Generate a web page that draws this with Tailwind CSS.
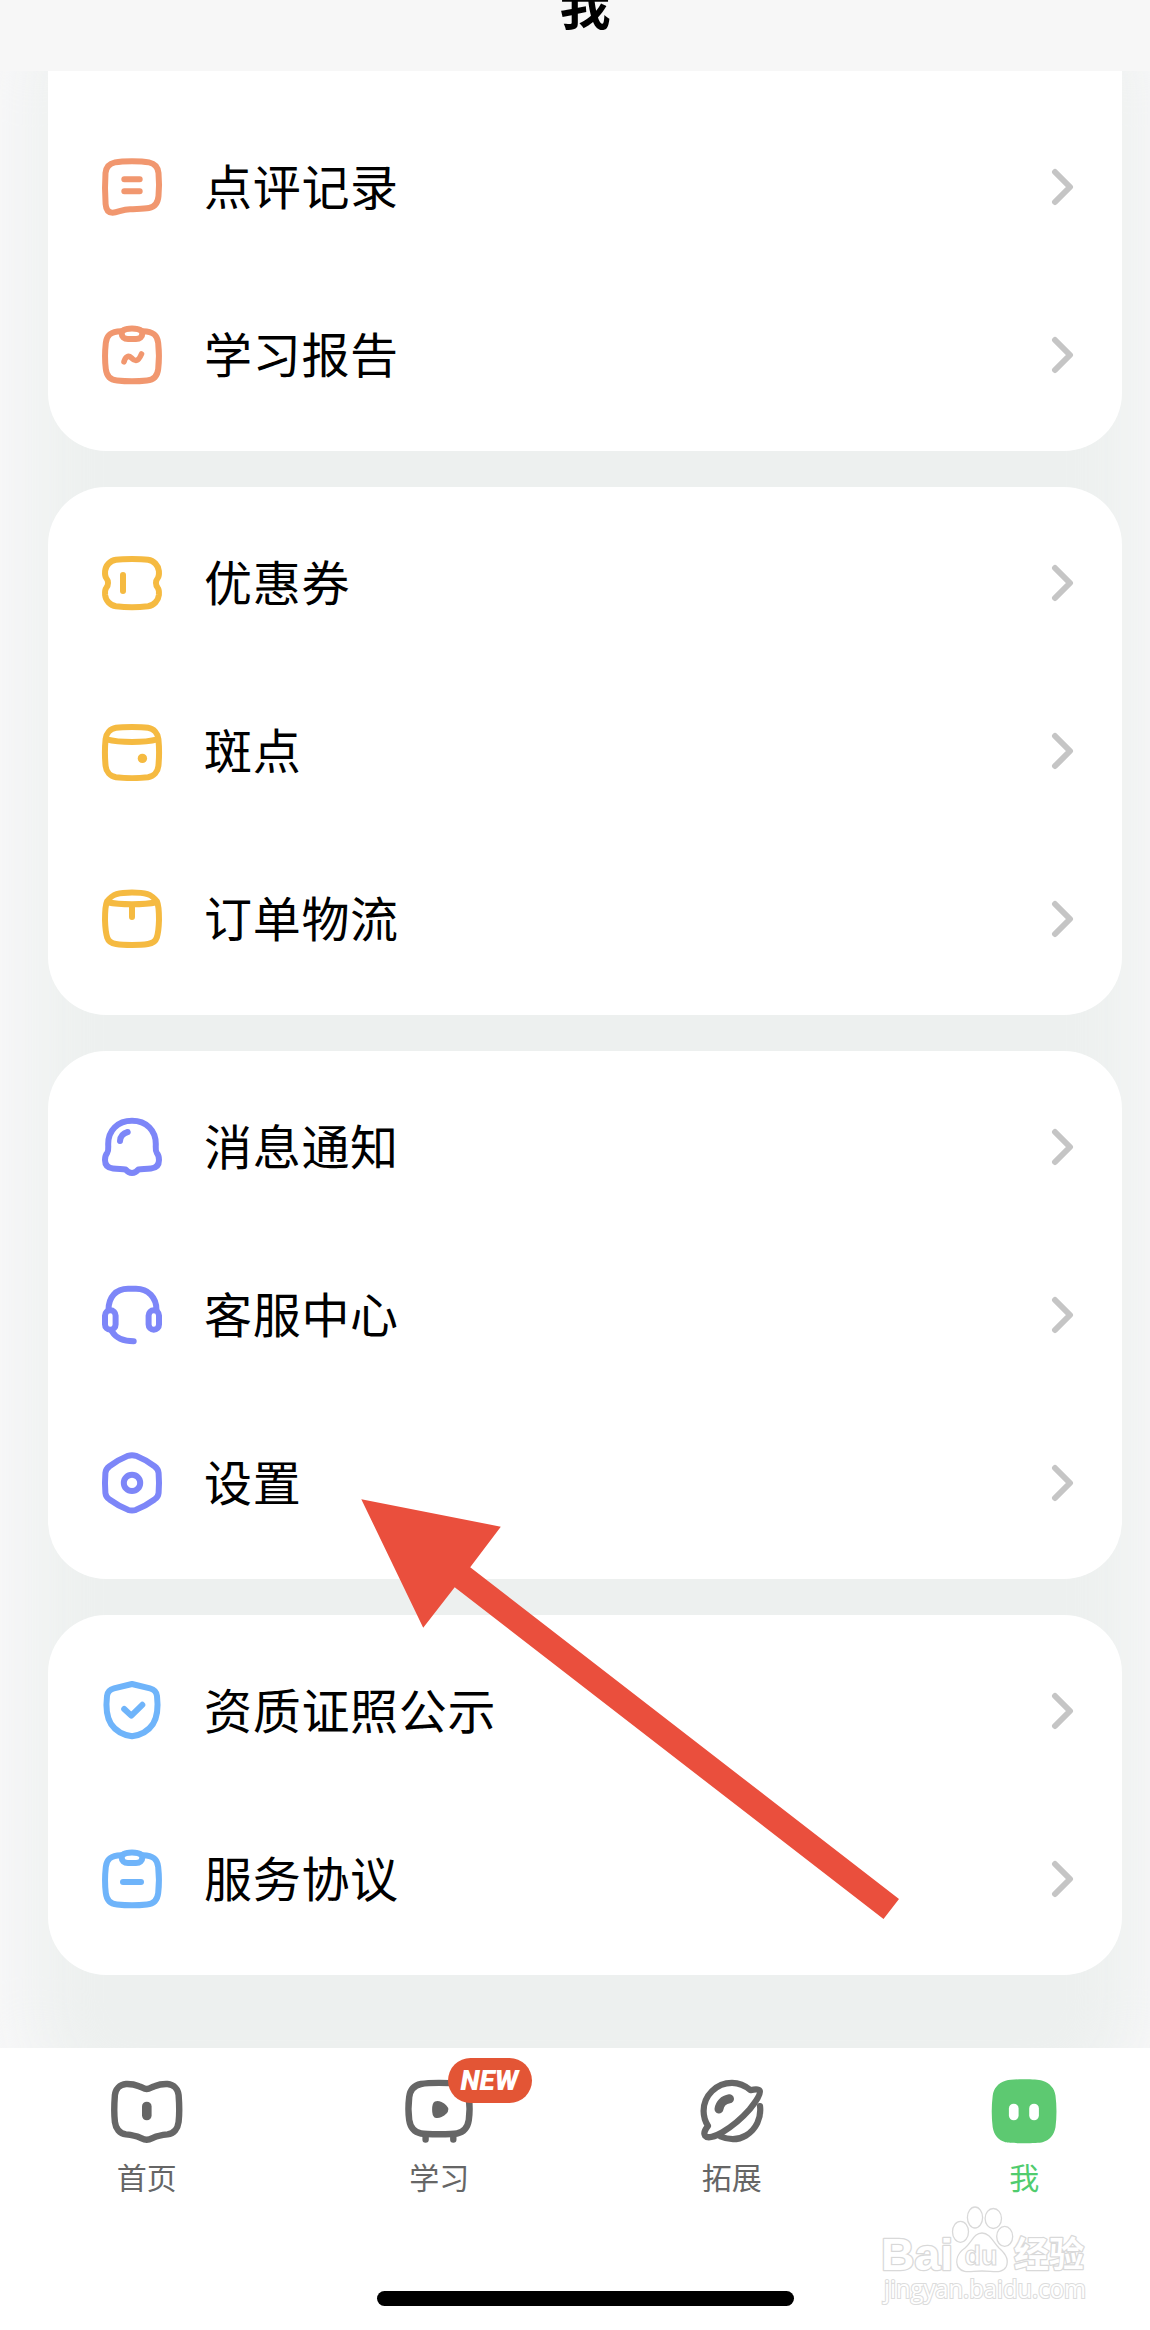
<!DOCTYPE html>
<html lang="zh-CN">
<head>
  <meta charset="UTF-8" />
  <meta name="viewport" content="width=device-width, initial-scale=1.0"/>
  <title>我</title>
  <script src="https://cdn.jsdelivr.net/npm/@tailwindcss/browser@4"></script>
</head>
<body class="bg-white text-black font-['Noto_Sans_CJK_SC',sans-serif]">

  <!-- Shared shapes -->
  <svg class="hidden">
    <symbol id="chevron" viewBox="0 0 24 40">
      <path d="M5 5L20 20L5 35" fill="none" stroke="#c5c5c5" stroke-width="6" stroke-linecap="round" stroke-linejoin="round"/>
    </symbol>
    <symbol id="clipboard" viewBox="0 0 72 72">
      <path d="M25 12.3C14 12.5 10.5 17 9.8 24C8.8 33 8.8 42 9.8 50C10.6 57 14 61 21 61.5C30 62.5 42 62.5 51 61.5C58 61 61.4 57 62.2 50C63.2 42 63.2 33 62.2 24C61.5 17 58 12.5 47 12.3"/>
      <path d="M30 10.2C33 9.5 39 9.5 42 10.2C45 10.8 46.3 12 46.3 14.5C46.3 18 44 20 40 20H32C28 20 25.7 18 25.7 14.5C25.7 12 27 10.8 30 10.2Z"/>
    </symbol>
  </svg>

  <div class="relative w-full h-[2330px] overflow-hidden">
    <div class="w-[1170px] h-full flex flex-col">

      <!-- Title bar -->
      <header class="h-[71px] shrink-0 bg-[#f7f7f7] flex justify-center">
        <h1 class="h-[51px] mt-[-22px] text-[51px] leading-[51px] font-bold">我</h1>
      </header>

      <!-- Menu -->
      <main class="relative h-[1977px] shrink-0 overflow-hidden bg-[#f8f8f9]">
        <div class="absolute -top-20 -bottom-16 left-8 right-8 rounded-[100px] bg-[#edf0ef] blur-[30px]"></div>

        <div class="relative px-12 flex flex-col gap-9">
          <section class="bg-white rounded-b-[58px] pt-8 pb-3">
            <div class="h-[168px] pl-12 pr-12 flex items-center">
              <svg class="size-[72px] text-[#f1976f]" viewBox="0 0 72 72" fill="none" stroke="currentColor" stroke-width="6" stroke-linecap="round" stroke-linejoin="round">
                <path d="M36 10.2C44 10.2 49 10.6 53 11.4C59 12.6 62 17 62.5 22C63.2 30 63.2 38 62.5 45C62 51 59 56 53 57C48 58 42 57.8 34 58.2C26 58.5 22 61.5 16.5 61.7C12.5 61.7 10 58.5 9.6 53C8.9 43 8.8 32 9.5 22C10 17 13 12.6 19 11.4C23 10.6 28 10.2 36 10.2Z"/>
                <path d="M28.3 28.3H43.7M28.3 40.3H43.7"/>
              </svg>
              <span class="ml-9 pb-1.5 text-[48px] leading-[60px] tracking-[0.7px]">点评记录</span>
              <svg class="ml-auto w-6 h-10"><use href="#chevron"/></svg>
            </div>
            <div class="h-[168px] pl-12 pr-12 flex items-center">
              <svg class="size-[72px] text-[#f1976f]" viewBox="0 0 72 72" fill="none" stroke="currentColor" stroke-width="6" stroke-linecap="round" stroke-linejoin="round">
                <use href="#clipboard"/>
                <path d="M28 42.8C29.3 37.8 32.3 36 35.3 38.8C39 42.6 42 43.2 45.5 35" stroke-width="5.6"/>
              </svg>
              <span class="ml-9 pb-1.5 text-[48px] leading-[60px] tracking-[0.7px]">学习报告</span>
              <svg class="ml-auto w-6 h-10"><use href="#chevron"/></svg>
            </div>
          </section>

          <section class="bg-white rounded-[58px] py-3">
            <div class="h-[168px] pl-12 pr-12 flex items-center">
              <svg class="size-[72px] text-[#f5ba41]" viewBox="0 0 72 72" fill="none" stroke="currentColor" stroke-width="6" stroke-linecap="round" stroke-linejoin="round">
                <path d="M36 12C43 12 48 12.2 52 12.7C58 13.6 62.3 18.5 62.9 24C63.2 28 63 29.5 61.8 31C59.4 34 59.4 38 61.8 41C63 42.5 63.2 44 62.9 48C62.3 53.5 58 58.4 52 59.3C44 60.2 28 60.2 20 59.3C14 58.4 9.7 53.5 9.1 48C8.8 44 9 42.5 10.2 41C12.6 38 12.6 34 10.2 31C9 29.5 8.8 28 9.1 24C9.7 18.5 14 13.6 20 12.7C24 12.2 29 12 36 12Z"/>
                <path d="M27 28V44"/>
              </svg>
              <span class="ml-9 pb-1.5 text-[48px] leading-[60px] tracking-[0.7px]">优惠券</span>
              <svg class="ml-auto w-6 h-10"><use href="#chevron"/></svg>
            </div>
            <div class="h-[168px] pl-12 pr-12 flex items-center">
              <svg class="size-[72px] text-[#f5ba41]" viewBox="0 0 72 72" fill="none" stroke="currentColor" stroke-width="6" stroke-linecap="round" stroke-linejoin="round">
                <path d="M36 12C43 12 48 12.2 52 12.8C58 13.8 61.8 18.5 62.4 24C63.2 32 63.2 43 62.4 51C61.8 56.5 58 61.2 52 62.2C44 63.2 28 63.2 20 62.2C14 61.2 10.2 56.5 9.6 51C8.8 43 8.8 32 9.6 24C10.2 18.5 14 13.8 20 12.8C24 12.2 29 12 36 12Z"/>
                <path d="M10.5 24.3C24 27.8 48 27.8 61.5 24.3"/>
                <circle cx="46.4" cy="43.4" r="4.7" fill="currentColor" stroke="none"/>
              </svg>
              <span class="ml-9 pb-1.5 text-[48px] leading-[60px] tracking-[0.7px]">斑点</span>
              <svg class="ml-auto w-6 h-10"><use href="#chevron"/></svg>
            </div>
            <div class="h-[168px] pl-12 pr-12 flex items-center">
              <svg class="size-[72px] text-[#f5ba41]" viewBox="0 0 72 72" fill="none" stroke="currentColor" stroke-width="6" stroke-linecap="round" stroke-linejoin="round">
                <path d="M36 9.6C43 9.6 48 10.2 51.5 11.2C54.5 12 59 15.5 61 18.5C62.6 22 63 29 63 37C62.8 44 62.2 50 60.8 54.5C59.5 58.5 57 60.3 52 61C44 62.2 28 62.2 20 61C15 60.3 12.5 58.5 11.2 54.5C9.8 50 9.2 44 9 37C9 29 9.4 22 11 18.5C13 15.5 17.5 12 20.5 11.2C24 10.2 29 9.6 36 9.6Z"/>
                <path d="M11.5 19.3C24 22 48 22 60.5 19.3M36 22V34"/>
              </svg>
              <span class="ml-9 pb-1.5 text-[48px] leading-[60px] tracking-[0.7px]">订单物流</span>
              <svg class="ml-auto w-6 h-10"><use href="#chevron"/></svg>
            </div>
          </section>

          <section class="bg-white rounded-[58px] py-3">
            <div class="h-[168px] pl-12 pr-12 flex items-center">
              <svg class="size-[72px] text-[#7d86f8]" viewBox="0 0 72 72" fill="none" stroke="currentColor" stroke-width="6" stroke-linecap="round" stroke-linejoin="round">
                <path d="M36 9.8C21.5 9.8 12.2 19.5 12.2 33C12.2 37 12.8 39.5 11.2 42C9.4 44 9 46 9 49C9 54.5 12 57 17 57.5C22 58 26 58 29.5 58.4C31.5 61 33 62 36 62C39 62 40.5 61 42.5 58.4C46 58 50 58 55 57.5C60 57 63 54.5 63 49C63 46 62.6 44 60.8 42C59.2 39.5 59.8 37 59.8 33C59.8 19.5 50.5 9.8 36 9.8Z"/>
                <path d="M24 30C24.3 26 27 22.3 31.7 21"/>
              </svg>
              <span class="ml-9 pb-1.5 text-[48px] leading-[60px] tracking-[0.7px]">消息通知</span>
              <svg class="ml-auto w-6 h-10"><use href="#chevron"/></svg>
            </div>
            <div class="h-[168px] pl-12 pr-12 flex items-center">
              <svg class="size-[72px] text-[#7d86f8]" viewBox="0 0 72 72" fill="none" stroke="currentColor" stroke-width="6" stroke-linecap="round" stroke-linejoin="round">
                <path d="M12.5 31C12.5 18 20 9.8 32 9.8H40C52 9.8 60.5 18 60.5 31"/>
                <rect x="9" y="31.3" width="10.6" height="19.4" rx="5.3"/>
                <rect x="52.6" y="31.3" width="10.4" height="19.4" rx="5.2"/>
                <path d="M16 52.5C20 59 27 62.3 37.7 62.3"/>
              </svg>
              <span class="ml-9 pb-1.5 text-[48px] leading-[60px] tracking-[0.7px]">客服中心</span>
              <svg class="ml-auto w-6 h-10"><use href="#chevron"/></svg>
            </div>
            <div class="h-[168px] pl-12 pr-12 flex items-center">
              <svg class="size-[72px] text-[#7d86f8]" viewBox="0 0 72 72" fill="none" stroke="currentColor" stroke-width="6" stroke-linecap="round" stroke-linejoin="round">
                <path d="M32 8.8C35 7.8 37 7.8 40 8.8C46 11.2 53 15.2 58.5 19.2C61 21 62.3 23 62.6 26C63.1 32 63.1 40 62.6 46C62.3 49 61 51 58.5 52.5C53 56.5 46 60.5 40 62.8C37 63.8 35 63.8 32 62.8C26 60.5 19 56.5 13.5 52.5C11 51 9.7 49 9.4 46C8.9 40 8.9 32 9.4 26C9.7 23 11 21 13.5 19.2C19 15.2 26 11.2 32 8.8Z"/>
                <circle cx="36" cy="35.9" r="8.2"/>
              </svg>
              <span class="ml-9 pb-1.5 text-[48px] leading-[60px] tracking-[0.7px]">设置</span>
              <svg class="ml-auto w-6 h-10"><use href="#chevron"/></svg>
            </div>
          </section>

          <section class="bg-white rounded-[58px] py-3">
            <div class="h-[168px] pl-12 pr-12 flex items-center">
              <svg class="size-[72px] text-[#6fb4fa]" viewBox="0 0 72 72" fill="none" stroke="currentColor" stroke-width="6" stroke-linecap="round" stroke-linejoin="round">
                <path d="M36 9L54 13.4C58.5 14.6 60.5 17 61 21C62.3 32 62 41 57 49C52 56.5 45 60 36 61.3C27 60 20 56.5 15 49C10 41 9.7 32 11 21C11.5 17 13.5 14.6 18 13.4Z"/>
                <path d="M28.2 34L35.3 40.6L46.3 29.8"/>
              </svg>
              <span class="ml-9 pb-1.5 text-[48px] leading-[60px] tracking-[0.7px]">资质证照公示</span>
              <svg class="ml-auto w-6 h-10"><use href="#chevron"/></svg>
            </div>
            <div class="h-[168px] pl-12 pr-12 flex items-center">
              <svg class="size-[72px] text-[#6fb4fa]" viewBox="0 0 72 72" fill="none" stroke="currentColor" stroke-width="6" stroke-linecap="round" stroke-linejoin="round">
                <use href="#clipboard"/>
                <path d="M27 39H45"/>
              </svg>
              <span class="ml-9 pb-1.5 text-[48px] leading-[60px] tracking-[0.7px]">服务协议</span>
              <svg class="ml-auto w-6 h-10"><use href="#chevron"/></svg>
            </div>
          </section>
        </div>
      </main>

      <!-- Tab bar -->
      <nav class="grid grid-cols-4 pt-[27px] bg-white text-[#666]">
        <a class="flex flex-col items-center">
          <svg class="w-20 h-[72px]" viewBox="0 0 80 72" fill="none" stroke="currentColor" stroke-width="6.4" stroke-linecap="round" stroke-linejoin="round">
            <path d="M40.7 14C43.5 14 45.5 12.3 48.5 11.2C52.5 9.6 57 8.8 61.5 9C68 9.5 72 14.5 72.6 20C73.4 30 73.4 40 72.6 47C71.8 53.5 68 58.5 61.5 59.4C56 60 51 61 47.5 62.6C45 63.8 43.5 64.8 40.7 64.8C38 64.8 36.5 63.8 34 62.6C30.5 61 25.5 60 20 59.4C13.5 58.5 9.7 53.5 8.9 47C8.1 40 8.1 30 8.9 20C9.5 14.5 13.5 9.5 20 9C24.5 8.8 29 9.6 33 11.2C36 12.3 38 14 40.7 14Z"/>
            <rect x="36" y="26.7" width="9.6" height="18.6" rx="4.8" fill="currentColor" stroke="none"/>
          </svg>
          <span class="mt-[7px] pl-px text-[30px] leading-[44px]">首页</span>
        </a>
        <a class="relative flex flex-col items-center">
          <svg class="w-20 h-[72px]" viewBox="0 0 80 72" fill="none" stroke="currentColor" stroke-width="6.4" stroke-linecap="round" stroke-linejoin="round">
            <path d="M40 7.9C47 7.9 53 8.1 58 9C65 10.5 69 15.5 69.8 22C70.8 30 70.8 38 69.8 45C68.8 51.5 65 57 58 58.5C53 59.5 27 59.5 22 58.5C15 57 11.2 51.5 10.2 45C9.2 38 9.2 30 10.2 22C11 15.5 15 10.5 22 9C27 8.1 33 7.9 40 7.9Z"/>
            <path d="M26.6 60V64.6M54.3 60V64.6"/>
            <path d="M37 29C39.5 28 43.5 30.2 45.5 32.3C47 33.8 47 35.4 45.5 36.8C43.5 39 39.5 41 37 40.2C35.4 39.2 35.4 30 37 29Z" fill="currentColor" stroke-width="5.4"/>
          </svg>
          <span class="mt-[7px] pl-px text-[30px] leading-[44px]">学习</span>
          <span class="absolute left-[155px] -top-[17px] w-[84px] h-[45px] rounded-full bg-[#e35535] text-white text-center text-[28px] leading-[45px] font-black italic font-['Roboto',sans-serif]">NEW</span>
        </a>
        <a class="flex flex-col items-center">
          <svg class="w-20 h-[72px]" viewBox="0 0 80 72" fill="none" stroke="currentColor" stroke-width="6.2" stroke-linecap="round" stroke-linejoin="round">
            <path d="M59.5 15.2C54 10.5 48 7.9 41 7.9C25.5 7.9 12.6 20.5 12.6 36C12.6 42 14.2 46.5 17 51C14 54.5 12.6 58.5 14 60.7C16.5 63.8 24 61.5 31 57.5C41 51.5 51.5 42.5 58.5 34.5C65 26.5 70.5 18.5 68.7 15.7C67.5 13.8 64 14 59.5 15.2Z"/>
            <path d="M69 31C70.5 43 65 54.5 55 60.5C47.5 65 39 65.5 29.5 61.5"/>
            <path d="M28 34C28.7 29 32.5 24.7 38.5 23.8" stroke-width="9"/>
          </svg>
          <span class="mt-[7px] pl-px text-[30px] leading-[44px]">拓展</span>
        </a>
        <a class="flex flex-col items-center text-[#50cc6e]">
          <svg class="w-20 h-[72px]" viewBox="0 0 80 72">
            <path d="M40 4.3C49 4.3 54 4.6 58.5 5.8C66 8.3 70.5 13.3 71.5 20.8C72.8 31 72.8 42 71.5 52.3C70 60.3 65.5 65.3 58.5 67.3C54 68.6 26 68.6 21.5 67.3C14.5 65.3 10 60.3 8.7 52.3C7.4 42 7.4 31 8.7 20.8C9.7 13.3 14 8.3 21.5 5.8C26 4.6 31 4.3 40 4.3Z" fill="#5dc971"/>
            <rect x="24.9" y="28.7" width="9.7" height="16.6" rx="4.85" fill="#fff"/>
            <rect x="45.2" y="28.7" width="9.7" height="16.6" rx="4.85" fill="#fff"/>
          </svg>
          <span class="mt-[7px] pl-px text-[30px] leading-[44px]">我</span>
        </a>
      </nav>

      <!-- Home indicator -->
      <div class="mt-auto mb-6 mx-auto w-[417px] h-[15px] rounded-full bg-black"></div>
    </div>

    <!-- Arrow pointing at 设置 -->
    <svg class="absolute left-[361px] top-[1499px] w-[540px] h-[422px]" viewBox="361 1499 540 422">
      <polygon points="361.3,1499.2 500.8,1526.7 470.2,1567.3 899,1899 883.5,1919 454.7,1587.3 423.2,1627.7" fill="#ea4f3d"/>
    </svg>

    <!-- Watermark -->
    <svg class="absolute left-[876px] top-[2200px] w-[220px] h-[110px]" viewBox="876 2200 220 110" fill="#fff" stroke="#d9d9d9" stroke-width="1.3">
      <g font-weight="700" stroke-width="2.6" paint-order="stroke" stroke-linejoin="round">
        <text x="881" y="2270" font-family="Liberation Sans, sans-serif" font-size="45" textLength="72" lengthAdjust="spacingAndGlyphs">Bai</text>
        <text x="1014" y="2267" font-family="Noto Sans CJK SC, sans-serif" font-size="35" textLength="70">经验</text>
      </g>
      <ellipse cx="960.5" cy="2231.8" rx="8" ry="10.5"/>
      <ellipse cx="975" cy="2217.5" rx="7.6" ry="10.5"/>
      <ellipse cx="993.3" cy="2218.5" rx="8.2" ry="10"/>
      <ellipse cx="1004.7" cy="2236.4" rx="8" ry="10"/>
      <path d="M982 2233C990 2233 993 2242 999 2248C1006 2254 1009 2261 1006 2267C1002 2274 994 2271 982 2271C970 2271 963 2274 958 2267C955 2260 958 2253 965 2248C972 2242 974 2233 982 2233Z"/>
      <text x="964.5" y="2264.5" font-family="Liberation Sans, sans-serif" font-size="27" font-weight="700" textLength="33" lengthAdjust="spacingAndGlyphs" stroke-width="1.1">du</text>
      <text x="884" y="2298" font-family="Open Sans, sans-serif" font-size="25" textLength="202" lengthAdjust="spacingAndGlyphs" stroke="#dcdcdc" stroke-width="2.2" paint-order="stroke">jingyan.baidu.com</text>
    </svg>
  </div>

</body>
</html>
